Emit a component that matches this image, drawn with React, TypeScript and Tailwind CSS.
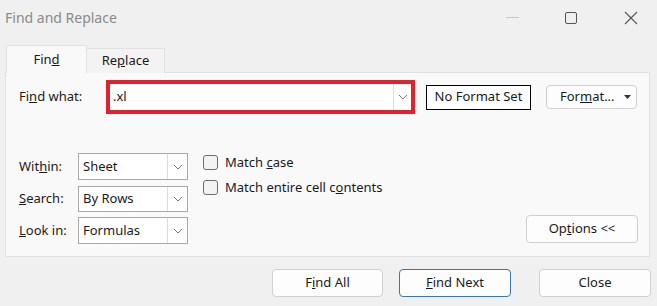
const font = { fontFamily: '"Noto Sans", "Open Sans", sans-serif' }

function Chevron() {
  return (
    <svg width="10" height="6" viewBox="0 0 10 6" fill="none" stroke="#7a7a7a" strokeWidth="1">
      <path d="M1 1l4 4 4-4" />
    </svg>
  )
}

function Combo({ value, width = 'w-[110px]', height = 'h-[27px]' }: { value: string; width?: string; height?: string }) {
  return (
    <div className={`${width} ${height} flex bg-white border border-[#a9a9a9]`}>
      <div className="flex-1 flex items-center pl-[4px] text-[13px] text-[#1a1a1a]">{value}</div>
      <div className="w-[20px] border-l border-[#dcdcdc] flex items-center justify-center">
        <Chevron />
      </div>
    </div>
  )
}

function Btn({ children, primary = false, className = '' }: { children: React.ReactNode; primary?: boolean; className?: string }) {
  return (
    <div
      className={`flex items-center justify-center bg-[#fdfdfd] rounded-[4px] border text-[13px] text-[#1a1a1a] ${primary ? 'border-[#3b78a8]' : 'border-[#d0d0d0]'} ${className}`}
    >
      {children}
    </div>
  )
}

function Check({ children }: { children: React.ReactNode }) {
  return (
    <div className="flex items-center gap-[7px] h-[15px]">
      <div className="w-[15px] h-[15px] rounded-[3px] border border-[#6e6e6e] bg-[#f3f3f3]" />
      <span className="text-[13px] text-[#1a1a1a]">{children}</span>
    </div>
  )
}

export default function App() {
  return (
    <div className="w-[657px] h-[306px] bg-[#f0f0f0] flex flex-col overflow-hidden" style={font}>
      {/* Title bar */}
      <div className="h-[35px] flex items-center justify-between">
        <span className="pl-[5px] text-[14px] text-[#8a8a8a]">Find and Replace</span>
        <div className="flex items-center h-full">
          <div className="w-[13px] h-px bg-[#c8c8c8] mr-[46px]" />
          <div className="w-[12px] h-[12px] border border-[#555] rounded-[2px] mr-[47px]" />
          <svg width="14" height="14" viewBox="0 0 14 14" stroke="#555" strokeWidth="1.1" className="mr-[19px]">
            <path d="M1 1l12 12M13 1L1 13" />
          </svg>
        </div>
      </div>

      {/* Tabs */}
      <div className="flex items-end h-[38px] pl-[6px] -mb-px relative z-10">
        <div className="w-[81px] h-[28px] bg-[#f9f9f9] border border-b-0 border-[#e2e2e2] flex items-center justify-center text-[13px] text-[#1a1a1a] rounded-t-[2px]">
          <span>Fin<u>d</u></span>
        </div>
        <div className="w-[78px] h-[25px] bg-[#f3f3f3] border border-l-0 border-b-0 border-[#e2e2e2] flex items-center justify-center text-[13px] text-[#1a1a1a]">
          <span>Re<u>p</u>lace</span>
        </div>
      </div>

      {/* Panel */}
      <div className="mx-[5px] w-[645px] h-[185px] bg-[#f9f9f9] border border-[#e2e2e2] pt-[7px] pl-[13px] pr-[11px] flex flex-col">
        <div className="flex items-center h-[34px]">
          <span className="w-[87px] text-[13px] text-[#1a1a1a]">Fi<u>n</u>d what:</span>
          <div className="w-[309px] h-[34px] border-[4px] border-[#e0222c] bg-white flex">
            <div className="flex-1 flex items-center pl-[3px] text-[13px] text-[#1a1a1a]">.xl</div>
            <div className="w-[18px] border-l border-[#dcdcdc] flex items-center justify-center">
              <Chevron />
            </div>
          </div>
          <div className="ml-[11px] w-[105px] h-[25px] border border-black bg-white flex items-center justify-center text-[13px] text-[#1a1a1a]">
            No Format Set
          </div>
          <Btn className="ml-[15px] w-[91px] h-[24px] !justify-start pl-[13px] gap-[9px]">
            <span className="whitespace-nowrap">For<u>m</u>at...</span>
            <svg width="7" height="4" viewBox="0 0 7 4" className="shrink-0"><path d="M0 0h7L3.5 4z" fill="#333" /></svg>
          </Btn>
        </div>

        <div className="flex mt-[39px] flex-1">
          <div className="flex flex-col">
            <div className="flex items-center">
              <span className="w-[59px] text-[13px] text-[#1a1a1a]">Wit<u>h</u>in:</span>
              <Combo value="Sheet" />
            </div>
            <div className="flex items-center mt-[6px]">
              <span className="w-[59px] text-[13px] text-[#1a1a1a]"><u>S</u>earch:</span>
              <Combo value="By Rows" height="h-[26px]" />
            </div>
            <div className="flex items-center mt-[5px]">
              <span className="w-[59px] text-[13px] text-[#1a1a1a]"><u>L</u>ook in:</span>
              <Combo value="Formulas" />
            </div>
          </div>
          <div className="ml-[15px] pt-[2px] flex flex-col gap-[10px]">
            <Check>Match <u>c</u>ase</Check>
            <Check>Match entire cell c<u>o</u>ntents</Check>
          </div>
          <div className="flex-1" />
          <Btn className="self-start mt-[62px] w-[112px] h-[28px]">
            <span>Op<u>t</u>ions &lt;&lt;</span>
          </Btn>
        </div>
      </div>

      {/* Bottom buttons */}
      <div className="flex justify-end pr-[6px] mt-[12px]">
        <Btn className="w-[111px] h-[28px]"><span>F<u>i</u>nd All</span></Btn>
        <Btn primary className="ml-[16px] w-[112px] h-[28px]"><span><u>F</u>ind Next</span></Btn>
        <Btn className="ml-[28px] w-[112px] h-[28px]"><span>Close</span></Btn>
      </div>
    </div>
  )
}
